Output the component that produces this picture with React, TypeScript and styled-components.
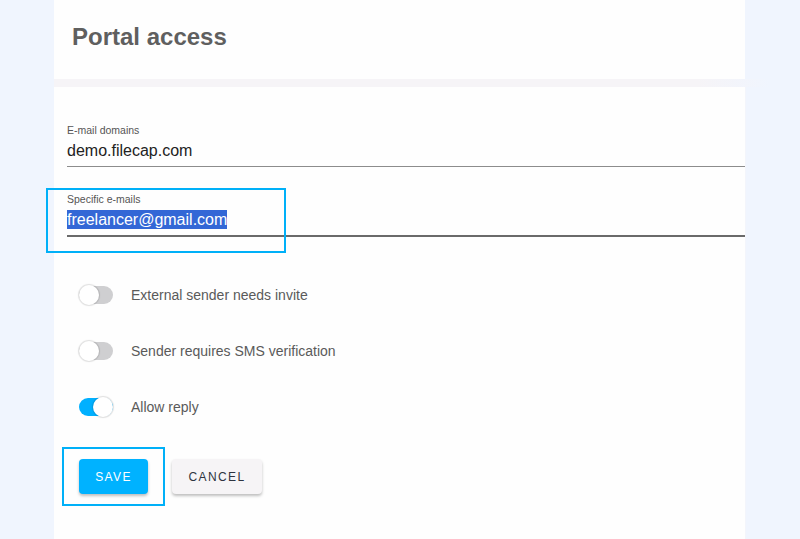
import styled, { createGlobalStyle } from "styled-components";

const GlobalStyle = createGlobalStyle`
  html, body {
    margin: 0;
    padding: 0;
    background: #f0f5fe;
    font-family: "Liberation Sans", Arial, sans-serif;
  }
`;

const Page = styled.div`
  display: flex;
  min-height: 539px;
  padding-left: 54px;
`;

const Column = styled.div`
  width: 691px;
  display: flex;
  flex-direction: column;
`;

const Header = styled.div`
  height: 79px;
  background: #fefefe;
  display: flex;
  align-items: center;
  padding-left: 18px;
  box-sizing: border-box;
`;

const Title = styled.h1`
  margin: 0 0 5px;
  font-size: 24px;
  font-weight: 700;
  color: #5f5f5f;
`;

const Band = styled.div`
  height: 8px;
  width: 716px;
  background: linear-gradient(to right, #f6f4f7 90%, rgba(246, 244, 247, 0));
`;

const Body = styled.div`
  flex: 1;
  background: #fefefe;
  padding: 37px 0 0 13px;
  box-shadow: 1px 0 0 #f3f5fb;
`;

const Field = styled.div<{ $focused?: boolean }>`
  position: relative;
  margin-top: ${(p) => (p.$focused ? "26px" : "0")};
  padding-bottom: 5px;
  border-bottom: ${(p) => (p.$focused ? "2px solid #6a6a6a" : "1px solid #8c8c8c")};
`;

const Label = styled.div`
  font-size: 10.5px;
  line-height: 12px;
  color: #555;
`;

const Value = styled.div`
  margin-top: 5px;
  font-size: 16px;
  line-height: 20px;
  color: #222;
`;

const Selected = styled.span`
  background: #3367d6;
  color: #fff;
  padding: 1px 0;
`;

const Highlight = styled.div<{ $left: number; $top: number; $w: number; $h: number }>`
  position: absolute;
  left: ${(p) => p.$left}px;
  top: ${(p) => p.$top}px;
  width: ${(p) => p.$w}px;
  height: ${(p) => p.$h}px;
  border: 2px solid #00b0f8;
  box-sizing: border-box;
  pointer-events: none;
`;

const Toggles = styled.div`
  margin-top: 30px;
  padding-left: 12px;
`;

const Row = styled.div`
  height: 56px;
  display: flex;
  align-items: center;
  gap: 18px;
`;

const Track = styled.div<{ $on?: boolean }>`
  position: relative;
  width: 34px;
  height: 18px;
  border-radius: 9px;
  background: ${(p) => (p.$on ? "#00b0ff" : "#cfcfd1")};
`;

const Thumb = styled.div<{ $on?: boolean }>`
  position: absolute;
  top: -1px;
  left: ${(p) => (p.$on ? "14px" : "0")};
  width: 20px;
  height: 20px;
  border-radius: 50%;
  background: #fff;
  box-shadow: 0 0 1px 1px rgba(0, 0, 0, 0.12);
`;

const RowText = styled.span`
  font-size: 14px;
  color: #5a5a5a;
`;

const Actions = styled.div`
  margin-top: 24px;
  padding-left: 12px;
  display: flex;
  gap: 24px;
`;

const Wrap = styled.div`
  position: relative;
`;

const Button = styled.button<{ $primary?: boolean }>`
  height: 35px;
  width: ${(p) => (p.$primary ? "69px" : "90px")};
  padding: 0;
  border: none;
  border-radius: 4px;
  font-family: "Liberation Sans", Arial, sans-serif;
  font-size: 12px;
  font-weight: 400;
  letter-spacing: 1.4px;
  background: ${(p) => (p.$primary ? "#00b2ff" : "#f6f4f6")};
  color: ${(p) => (p.$primary ? "#fff" : "#2e3440")};
  box-shadow: 0 2px 3px rgba(0, 0, 0, 0.25);
  cursor: pointer;
`;

const toggles = [
  { label: "External sender needs invite", on: false },
  { label: "Sender requires SMS verification", on: false },
  { label: "Allow reply", on: true },
];

export default function App() {
  return (
    <>
      <GlobalStyle />
      <Page>
        <Column>
          <Header>
            <Title>Portal access</Title>
          </Header>
          <Band />
          <Body>
            <Field>
              <Label>E-mail domains</Label>
              <Value>demo.filecap.com</Value>
            </Field>
            <Field $focused>
              <Label>Specific e-mails</Label>
              <Value>
                <Selected>freelancer@gmail.com</Selected>
              </Value>
              <Highlight $left={-21} $top={-5} $w={240} $h={65} />
            </Field>
            <Toggles>
              {toggles.map((t) => (
                <Row key={t.label}>
                  <Track $on={t.on}>
                    <Thumb $on={t.on} />
                  </Track>
                  <RowText>{t.label}</RowText>
                </Row>
              ))}
            </Toggles>
            <Actions>
              <Wrap>
                <Button $primary>SAVE</Button>
                <Highlight $left={-17} $top={-12} $w={103} $h={59} />
              </Wrap>
              <Button>CANCEL</Button>
            </Actions>
          </Body>
        </Column>
      </Page>
    </>
  );
}
